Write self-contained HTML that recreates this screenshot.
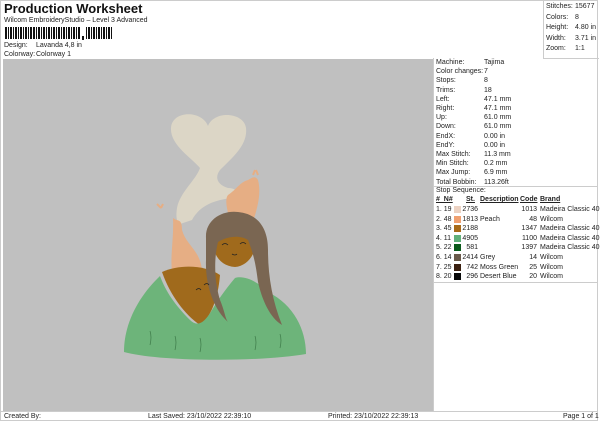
<!DOCTYPE html>
<html><head><style>
body{margin:0;width:600px;height:424px;background:#fff;font-family:"Liberation Sans",sans-serif;position:relative;overflow:hidden;color:#222}
.a{position:absolute;white-space:nowrap;font-size:7px}
</style></head><body>
<div class="a" style="left:4px;top:1px;font-size:13px;font-weight:bold;color:#111">Production Worksheet</div>
<div class="a" style="left:4px;top:17px">Wilcom EmbroideryStudio – Level 3 Advanced</div>
<svg class="a" style="left:5px;top:27px" width="112" height="13">
<g fill="#111">
<rect x="0" y="0" width="2" height="12"/><rect x="3" y="0" width="1" height="12"/><rect x="5" y="0" width="2" height="12"/><rect x="8" y="0" width="1" height="12"/><rect x="10" y="0" width="2" height="12"/><rect x="13" y="0" width="1" height="12"/><rect x="15" y="0" width="2" height="12"/><rect x="18" y="0" width="1" height="12"/><rect x="20" y="0" width="2" height="12"/><rect x="23" y="0" width="1" height="12"/><rect x="25" y="0" width="2" height="12"/><rect x="28" y="0" width="2" height="12"/><rect x="31" y="0" width="1" height="12"/><rect x="33" y="0" width="2" height="12"/><rect x="36" y="0" width="1" height="12"/><rect x="38" y="0" width="2" height="12"/><rect x="41" y="0" width="1" height="12"/><rect x="43" y="0" width="2" height="12"/><rect x="46" y="0" width="1" height="12"/><rect x="48" y="0" width="2" height="12"/><rect x="51" y="0" width="1" height="12"/><rect x="53" y="0" width="2" height="12"/><rect x="56" y="0" width="1" height="12"/><rect x="58" y="0" width="2" height="12"/><rect x="61" y="0" width="1" height="12"/><rect x="63" y="0" width="2" height="12"/><rect x="66" y="0" width="1" height="12"/><rect x="68" y="0" width="2" height="12"/><rect x="71" y="0" width="1" height="12"/><rect x="73" y="0" width="2" height="12"/><rect x="77" y="9" width="2" height="4"/><rect x="81" y="0" width="1" height="12"/><rect x="83" y="0" width="2" height="12"/><rect x="86" y="0" width="1" height="12"/><rect x="88" y="0" width="2" height="12"/><rect x="91" y="0" width="1" height="12"/><rect x="93" y="0" width="2" height="12"/><rect x="96" y="0" width="1" height="12"/><rect x="98" y="0" width="2" height="12"/><rect x="101" y="0" width="1" height="12"/><rect x="103" y="0" width="2" height="12"/><rect x="106" y="0" width="1" height="12"/></g></svg>
<div class="a" style="left:4px;top:42px">Design:</div><div class="a" style="left:36px;top:42px">Lavanda 4,8 in</div>
<div class="a" style="left:4px;top:51px">Colorway:</div><div class="a" style="left:36px;top:51px">Colorway 1</div>
<div style="position:absolute;left:0;top:0;width:598px;height:421px;border:1px solid #ccc;box-sizing:border-box"></div>
<div style="position:absolute;left:543px;top:0;width:55px;height:58px;border-left:1px solid #ccc;border-bottom:1px solid #ccc"></div>
<div class="a" style="left:546px;top:2px;line-height:10.5px">Stitches:<br>Colors:<br>Height:<br>Width:<br>Zoom:</div>
<div class="a" style="left:575px;top:2px;line-height:10.5px">15677<br>8<br>4.80 in<br>3.71 in<br>1:1</div>
<div style="position:absolute;left:3px;top:59px;width:430px;height:352px;background:#c0c0c0"></div>
<div style="position:absolute;left:433px;top:58px;width:165px;height:353px;border-left:1px solid #ccc"></div>
<div style="position:absolute;left:433px;top:186px;width:165px;border-top:1px solid #ccc"></div>
<div style="position:absolute;left:433px;top:282px;width:165px;border-top:1px solid #ccc"></div>
<div style="position:absolute;left:0;top:411px;width:598px;border-top:1px solid #ccc"></div>
<div class="a" style="left:436px;top:58px;line-height:9.2px">Machine:<br>Color changes:<br>Stops:<br>Trims:<br>Left:<br>Right:<br>Up:<br>Down:<br>EndX:<br>EndY:<br>Max Stitch:<br>Min Stitch:<br>Max Jump:<br>Total Bobbin:</div>
<div class="a" style="left:484px;top:58px;line-height:9.2px">Tajima<br>7<br>8<br>18<br>47.1 mm<br>47.1 mm<br>61.0 mm<br>61.0 mm<br>0.00 in<br>0.00 in<br>11.3 mm<br>0.2 mm<br>6.9 mm<br>113.26ft</div>
<div class="a" style="left:436px;top:187px">Stop Sequence:</div>
<div class="a" style="left:436px;top:196px;font-weight:bold;text-decoration:underline">#&nbsp; N#</div>
<div class="a" style="left:466px;top:196px;font-weight:bold;text-decoration:underline">St.</div>
<div class="a" style="left:480px;top:196px;font-weight:bold;text-decoration:underline">Description</div>
<div class="a" style="left:520px;top:196px;font-weight:bold;text-decoration:underline">Code</div>
<div class="a" style="left:540px;top:196px;font-weight:bold;text-decoration:underline">Brand</div>
<div class="a" style="left:436px;top:205px;line-height:9.6px">1. 19<br>2. 48<br>3. 45<br>4. 11<br>5. 22<br>6. 14<br>7. 25<br>8. 20</div>
<div style="position:absolute;left:454px;top:206px;width:7px">
<div style="height:7px;background:#ecd2c2;margin-bottom:2.6px"></div><div style="height:7px;background:#f0a070;margin-bottom:2.6px"></div><div style="height:7px;background:#a86a18;margin-bottom:2.6px"></div><div style="height:7px;background:#60b07a;margin-bottom:2.6px"></div><div style="height:7px;background:#0a5a1a;margin-bottom:2.6px"></div><div style="height:7px;background:#6a5a4a;margin-bottom:2.6px"></div><div style="height:7px;background:#3a2010;margin-bottom:2.6px"></div><div style="height:7px;background:#080808"></div></div>
<div class="a" style="left:460px;top:205px;line-height:9.6px;text-align:right;width:18px">2736<br>1813<br>2188<br>4905<br>581<br>2414<br>742<br>296</div>
<div class="a" style="left:480px;top:205px;line-height:9.6px"><br>Peach<br><br><br><br>Grey<br>Moss Green<br>Desert Blue</div>
<div class="a" style="left:516px;top:205px;line-height:9.6px;text-align:right;width:21px">1013<br>48<br>1347<br>1100<br>1397<br>14<br>25<br>20</div>
<div class="a" style="left:540px;top:205px;line-height:9.6px">Madeira Classic 40<br>Wilcom<br>Madeira Classic 40<br>Madeira Classic 40<br>Madeira Classic 40<br>Wilcom<br>Wilcom<br>Wilcom</div>
<div class="a" style="left:4px;top:413px">Created By:</div>
<div class="a" style="left:148px;top:413px">Last Saved: 23/10/2022 22:39:10</div>
<div class="a" style="left:328px;top:413px">Printed: 23/10/2022 22:39:13</div>
<div class="a" style="left:563px;top:413px">Page 1 of 1</div>
<svg style="position:absolute;left:0;top:0" width="600" height="424">
<path d="M208,126 C202,110 172,110 171,128 C170,145 192,158 200,168 C196,180 180,192 177,208 C176,215 176,222 180,224 L192,220 C200,205 215,200 232,198 C242,196 238,188 228,188 C218,185 214,178 220,170 C232,158 248,145 246,128 C244,112 214,110 208,126Z" fill="#dcd6c6"/>
<path d="M173,218 C178,222 182,218 182,230 C186,245 200,250 202,270 L172,272 C170,255 174,238 173,218Z" fill="#e6ae84"/>
<path d="M228,195 C236,190 240,182 248,180 C252,178 255,175 258,180 C262,195 256,212 252,225 L230,222 C228,212 224,200 228,195Z" fill="#e6ae84"/>
<path d="M157,204 l4,4 M163,204 l-2,4 M253,175 l2,-5 M258,175 l-2,-5" stroke="#e6ae84" stroke-width="2"/>
<path d="M162,272 C180,264 205,265 220,275 C218,300 210,318 200,325 C185,315 170,295 162,272Z" fill="#a06a1c"/>
<path d="M213,232 C218,220 245,218 254,232 C260,248 250,266 235,267 C218,266 210,250 213,232Z" fill="#a06a1c"/>
<path d="M160,276 C140,295 124,322 124,352 C160,362 260,362 306,354 C306,330 294,305 268,292 C258,282 245,275 235,278 C225,290 218,300 212,310 C205,322 198,328 190,320 C175,305 166,292 160,276Z" fill="#6db47a"/>
<path d="M206,238 C205,220 222,210 238,212 C258,214 268,228 268,250 C268,275 272,300 282,325 C270,318 262,300 258,282 C256,266 254,255 248,240 C240,235 228,236 218,242 C214,258 214,280 220,300 C225,312 225,318 228,322 C214,310 205,285 206,260Z" fill="#7a6652"/>
<path d="M222,245 q3,-3 6,0 M240,244 q3,-3 6,0 M232,254 q3,2 5,0 M196,290 q3,-3 5,0 M204,285 q3,-3 5,0" stroke="#222" stroke-width="0.8" fill="none"/>
<path d="M150,345 q2,-8 0,-14 M175,350 q2,-8 0,-14 M200,352 q2,-8 0,-14 M255,350 q2,-8 0,-14 M280,348 q2,-8 0,-14" stroke="#3d7a48" stroke-width="0.7" fill="none"/>
</svg>
</body></html>
